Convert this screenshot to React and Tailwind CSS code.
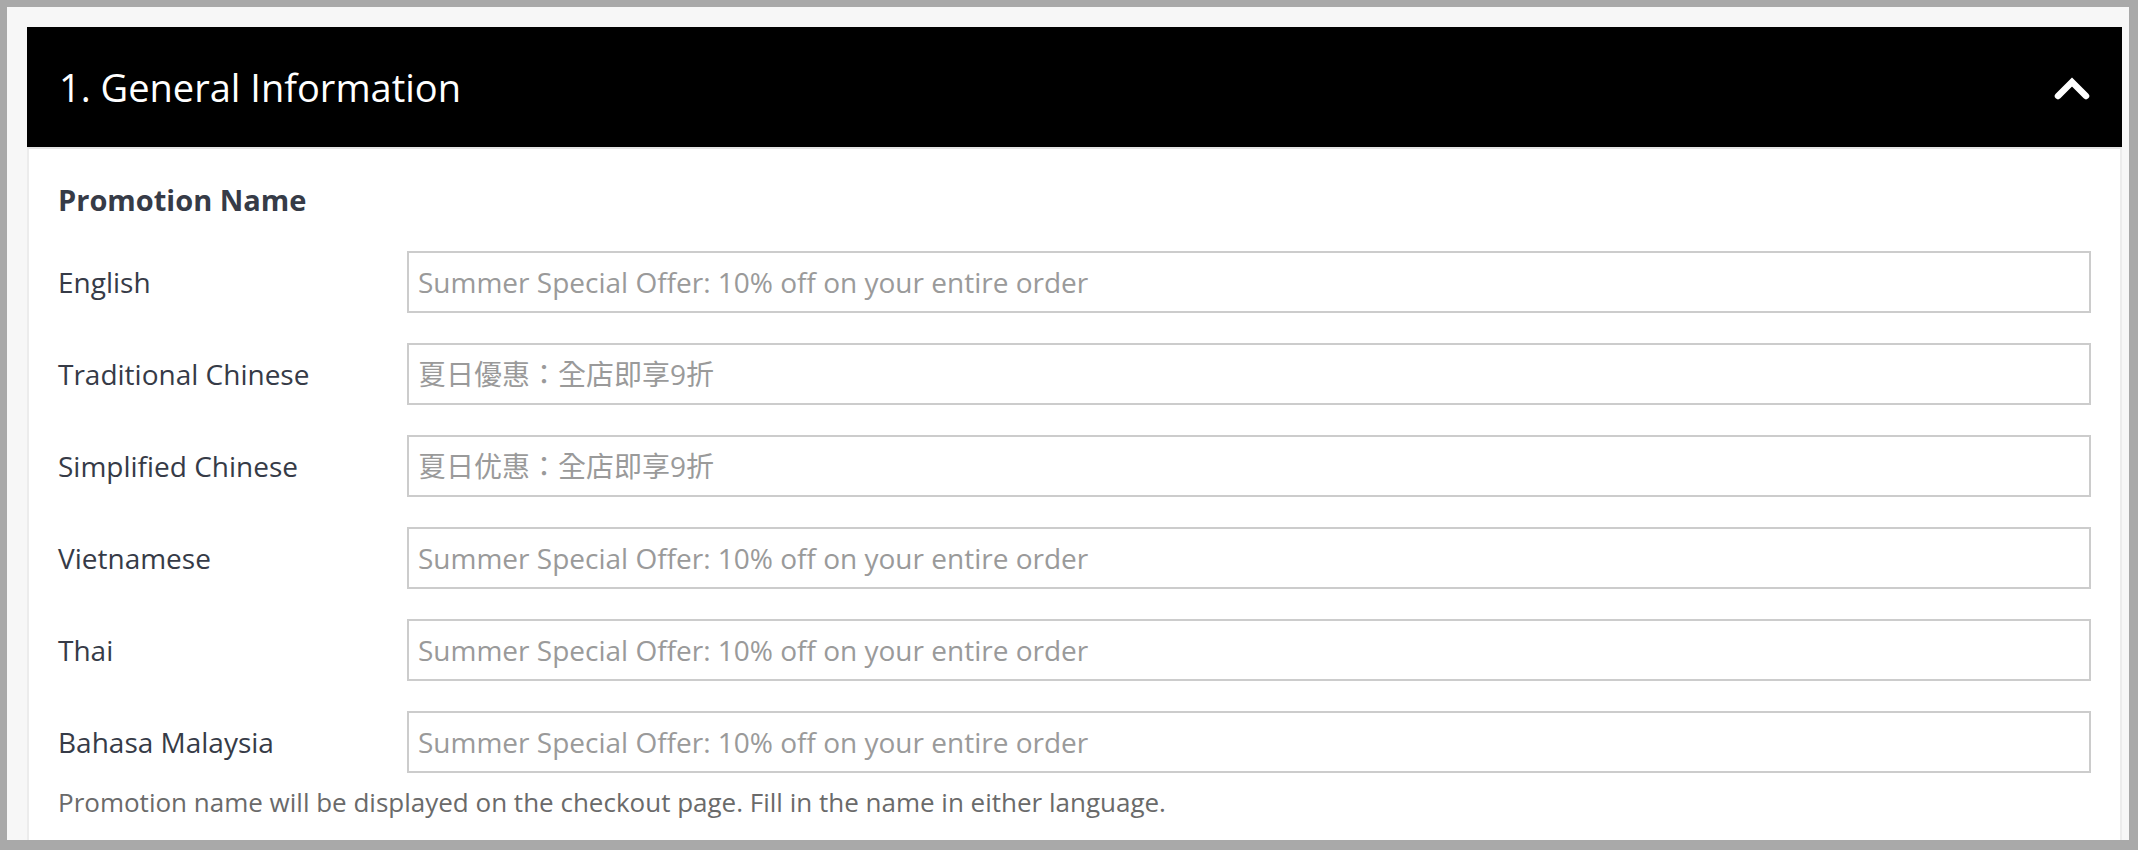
import { useState } from "react";

const languages = [
  { key: "en", label: "English", placeholder: "Summer Special Offer: 10% off on your entire order" },
  { key: "zh-hk", label: "Traditional Chinese", placeholder: "夏日優惠：全店即享9折" },
  { key: "zh-cn", label: "Simplified Chinese", placeholder: "夏日优惠：全店即享9折" },
  { key: "vi", label: "Vietnamese", placeholder: "Summer Special Offer: 10% off on your entire order" },
  { key: "th", label: "Thai", placeholder: "Summer Special Offer: 10% off on your entire order" },
  { key: "ms", label: "Bahasa Malaysia", placeholder: "Summer Special Offer: 10% off on your entire order" },
];

function ChevronUp() {
  return (
    <svg width="36" height="24" viewBox="0 0 36 24" fill="none" className="mt-[3px]">
      <polyline
        points="4,19 18,5 32,19"
        stroke="white"
        strokeWidth="6.5"
        strokeLinecap="round"
        strokeLinejoin="miter"
      />
    </svg>
  );
}

export default function App() {
  const [names, setNames] = useState({});
  const [open, setOpen] = useState(true);

  return (
    <div className="h-[850px] w-full overflow-hidden bg-[#a9a9a9] pl-[7px] pr-[9px] pt-[7px] pb-[10px] font-['Open_Sans','Noto_Sans_CJK_TC',sans-serif]">
      <div className="h-full overflow-hidden bg-[#f7f7f7] pl-[20px] pr-[7px] pt-[20px]">
        <div className="bg-white">
          {/* section header */}
          <button
            type="button"
            onClick={() => setOpen(!open)}
            className="flex h-[120px] w-full items-center justify-between bg-black pl-[32px] pr-[32px] text-left"
          >
            <span className="text-[38px] leading-[52px] text-white">1. General Information</span>
            <ChevronUp />
          </button>

          {/* section body */}
          <div className="border-2 border-t-[#e5e5e5] border-x-[#ececec] border-b-[#ececec] px-[29px] pt-[31px] pb-[30px]">
            <h3 className="text-[29px] font-bold leading-[40px] text-[#363b47]">Promotion Name</h3>

            <div className="mt-[31px] grid grid-cols-[349px_1fr] gap-y-[30px]">
              {languages.map((lang) => (
                <div key={lang.key} className="contents">
                  <label className="flex items-center text-[28px] leading-[40px] text-[#363b47]">{lang.label}</label>
                  <input
                    type="text"
                    value={names[lang.key] || ""}
                    onChange={(e) => setNames({ ...names, [lang.key]: e.target.value })}
                    placeholder={lang.placeholder}
                    className="h-[62px] w-full border-2 border-[#cccccc] px-[9px] text-[28px] text-[#363b47] outline-none placeholder:text-[#9a9a9a]"
                  />
                </div>
              ))}
            </div>

            <p className="mt-[10px] text-[26px] leading-[38px] text-[#6a6a6a]">
              Promotion name will be displayed on the checkout page. Fill in the name in either language.
            </p>
          </div>
        </div>
      </div>
    </div>
  );
}
